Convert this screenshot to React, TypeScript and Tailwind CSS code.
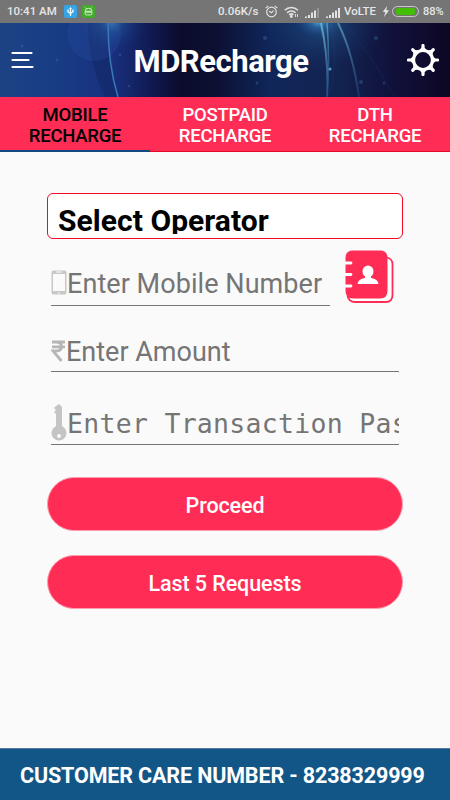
import React from 'react';

const tabs = [
  { top: 'MOBILE', active: true },
  { top: 'POSTPAID', active: false },
  { top: 'DTH', active: false },
];

function SignalIcon({ weak }: { weak?: boolean }) {
  return (
    <svg width="14" height="10" viewBox="0 0 14 10" fill="#e2e2e2">
      <path d="M0 10V8.5h2V10zM3 10V7h2v3zM6 10V4.5h2V10zM9 10V2.5h2V10z" />
      <path d="M12 10V0h2v10z" opacity={weak ? 0.3 : 1} />
    </svg>
  );
}

function StatusBar() {
  return (
    <div className="flex h-[23px] items-center bg-[#757575] pr-[6px] pl-[7px] text-[11.5px] font-medium text-[#e6e6e6]">
      <span className="w-[57px] pt-[1px] whitespace-nowrap">10:41 AM</span>
      <svg width="13" height="13" viewBox="0 0 13 13" fill="none">
        <rect width="13" height="13" rx="2" fill="#35a5e5" />
        <path d="M6.5 3v8M4 4.5v2.2L6.5 8.5L9 6.7V4.5" stroke="#fff" strokeWidth="1.3" />
        <path d="M5.2 4L6.5 2l1.3 2z" fill="#fff" />
      </svg>
      <svg className="ml-[5px]" width="13" height="13" viewBox="0 0 13 13" fill="none">
        <rect width="13" height="13" rx="2" fill="#43aa2d" />
        <path d="M3 6.3a3.5 3 0 0 1 7 0zM3 7.2h7v1.200a1.5 1.5 0 0 1-1.5 1.5h-4A1.5 1.5 0 0 1 3 8.400zM4.300 3.600L3.400 2.500M8.700 3.600l.9-1.100" stroke="#dff5d8" strokeWidth=".9" />
      </svg>
      <span className="ml-auto w-[43px] pt-[1px] whitespace-nowrap">0.06K/s</span>
      <svg className="ml-[4px]" width="13" height="13" viewBox="0 0 13 13" fill="none" stroke="#e2e2e2" strokeWidth="1.2">
        <circle cx="6.5" cy="7" r="4.8" />
        <path d="M4.2 6.2l2.3 1.5l2-2M.7 3.1L3.2 1M12.3 3.1L9.8 1" />
      </svg>
      <svg className="ml-[6px]" width="15" height="12" viewBox="0 0 15 12" fill="none" stroke="#e2e2e2" strokeWidth="1.5">
        <path d="M.7 4.3a9.5 9.5 0 0 1 13.3 0M3 6.7a6.2 6.2 0 0 1 8.6 0M5.2 8.9a3 3 0 0 1 4.2 0" />
        <circle cx="7.3" cy="10.5" r=".7" fill="#e2e2e2" />
        <path d="M11.5 8v3M13.5 8v3" strokeWidth=".9" />
      </svg>
      <div className="ml-[6px] flex w-[35px] justify-between pt-[2px]">
        <SignalIcon weak />
        <SignalIcon />
      </div>
      <span className="ml-[4px] w-[33px] pt-[1px] whitespace-nowrap">VoLTE</span>
      <svg className="ml-[5px]" width="8" height="11" viewBox="0 0 8 11" fill="#e2e2e2">
        <path d="M5.2 0L.8 5.8l2.5.5L2 11l5-6.5l-2.7-.5z" />
      </svg>
      <div className="ml-[2px] h-[11px] w-[27px] rounded-full border border-[#c9c9c9] p-[1px]">
        <div className="mx-[2px] h-full rounded-[2px] bg-[#43bd05]" />
      </div>
      <span className="ml-[4px] w-[21px] pt-[1px] text-[11px] whitespace-nowrap">88%</span>
    </div>
  );
}

function HeaderBackdrop() {
  return (
    <svg className="absolute inset-0" width="450" height="74" viewBox="0 0 450 74" fill="none">
      <defs>
        <linearGradient id="base" x1="0" x2="450" y1="0" y2="0" gradientUnits="userSpaceOnUse">
          <stop offset="0" stopColor="#1d4384" />
          <stop offset=".14" stopColor="#183b84" />
          <stop offset=".25" stopColor="#19307f" />
          <stop offset=".33" stopColor="#111b55" />
          <stop offset=".4" stopColor="#0b0c2c" />
          <stop offset=".48" stopColor="#0c1033" />
          <stop offset=".6" stopColor="#10265a" />
          <stop offset=".75" stopColor="#132350" />
          <stop offset=".88" stopColor="#101039" />
          <stop offset="1" stopColor="#0d0724" />
        </linearGradient>
        <radialGradient id="glow">
          <stop offset="0" stopColor="#4d9ed2" stopOpacity=".9" />
          <stop offset=".35" stopColor="#286fad" stopOpacity=".5" />
          <stop offset="1" stopColor="#19478b" stopOpacity="0" />
        </radialGradient>
        <linearGradient id="ray" x1="0" x2="0" y1="0" y2="74" gradientUnits="userSpaceOnUse">
          <stop stopColor="#74c0d8" />
          <stop offset="1" stopColor="#285c9c" stopOpacity=".6" />
        </linearGradient>
      </defs>
      <rect width="450" height="74" fill="url(#base)" />
      <path d="M88 0h20q0 40 10 74h-13Q88 40 88 0z" fill="#122866" opacity=".6" />
      <circle cx="94" cy="11" r="27" fill="#2c58ad" opacity=".22" />
      <ellipse cx="112" cy="0" rx="34" ry="28" fill="url(#glow)" opacity=".6" />
      <path d="M108 0q0 42 10 74" stroke="#3978b9" strokeWidth="1.5" />
      <ellipse cx="322" cy="0" rx="62" ry="48" fill="url(#glow)" opacity=".5" />
      <ellipse cx="318" cy="0" rx="23" ry="13" fill="url(#glow)" />
      <path d="M321 0q8 36 6 74" stroke="url(#ray)" strokeWidth="2" opacity=".8" />
      <path d="M327 0q3 38 0 74" stroke="url(#ray)" strokeWidth="1.5" opacity=".6" />
      <path d="M338 0q15 30 21 74" stroke="url(#ray)" strokeWidth="2" opacity=".6" />
      <path d="M331 0q8 42-2 74M345 0q28 35 50 74" stroke="#315f9b" opacity=".15" />
      <g fill="#4a87bd" opacity=".3">
        <circle cx="265" cy="15" r="2" />
        <circle cx="376" cy="15" r="2" />
        <circle cx="361" cy="59" r="2" />
        <circle cx="384" cy="60" r="1.5" />
        <circle cx="257" cy="60" r="1.5" />
        <circle cx="22" cy="23" r="1.5" />
        <circle cx="57" cy="37" r="1.3" />
        <circle cx="120" cy="32" r="1.3" />
        <circle cx="129" cy="63" r="1.3" />
      </g>
      <circle cx="330" cy="46" r="1.6" fill="#519bc8" />
    </svg>
  );
}

function GearIcon() {
  const angles = [0, 45, 90, 135, 180, 225, 270, 315];
  return (
    <svg width="32" height="32" viewBox="-16 -16 32 32" fill="#fff">
      <circle r="9.5" fill="none" stroke="#fff" strokeWidth="3.2" />
      {angles.map((angle) => (
        <path key={angle} transform={`rotate(${angle})`} d="M-3.8-9.5l2.2-3v-2a1.6 1.6 0 0 1 3.2 0v2l2.2 3z" />
      ))}
    </svg>
  );
}

function ContactsIcon() {
  return (
    <svg width="50" height="54" viewBox="0 0 50 54">
      <path d="M42 7.5Q47.5 9 47.5 14V45q0 7-7 7H10q-6 0-7.5-6" fill="#fff" stroke="#ff2d55" strokeWidth="1.8" />
      <path d="M8 .5h27q7.5 0 7.5 7.5v33q0 7.5-7.5 7.5H8Q.5 48.500.5 41V8Q.5.5 8 .5z" fill="#ff2d55" />
      <path d="M0 13h6M0 24.5h6M0 36h6" stroke="#fff" strokeWidth="2.8" strokeLinecap="round" />
      <ellipse cx="23" cy="21.5" rx="5.5" ry="6" fill="#fff" />
      <path d="M20 25h6v3q7 1.2 7.5 6H12.5q.5-4.8 7.5-6z" fill="#fff" />
    </svg>
  );
}

export default function App() {
  return (
    <div className="flex h-[800px] w-[450px] flex-col overflow-hidden bg-[#fafafa] font-['Roboto',sans-serif]">
      <StatusBar />

      {/* Header */}
      <header className="relative h-[74px] shrink-0">
        <HeaderBackdrop />
        <div className="relative flex h-full items-center justify-between px-[11px]">
          <svg width="23" height="18" viewBox="0 0 23 18" stroke="#fff" strokeWidth="2.2" strokeLinecap="round">
            <path d="M1.5 2h19M1.5 9h16M1.5 16h20" />
          </svg>
          <h1 className="pt-[3px] pl-[1px] text-[31px] leading-none font-bold tracking-[-0.45px] text-white">MDRecharge</h1>
          <GearIcon />
        </div>
      </header>

      {/* Tabs */}
      <nav className="grid h-[55px] shrink-0 grid-cols-3 bg-[#ff2d55]">
        {tabs.map((tab) => (
          <div
            key={tab.top}
            className={`pt-[8px] text-center text-[18.5px] leading-[21px] font-medium tracking-[-0.25px] ${
              tab.active ? 'border-b-2 border-[#12497f] text-black' : 'border-b border-[#e60a29] text-white'
            }`}
          >
            {tab.top}
            <br />
            RECHARGE
          </div>
        ))}
      </nav>

      {/* Recharge form */}
      <main className="flex flex-1 flex-col px-[47px] pt-[41px] text-[#757575]">
        <div className="h-[46px] rounded-[6px] border border-[#f30722] bg-white pt-[8px] pl-[10px]">
          <div className="h-[32px] overflow-hidden text-[30px] leading-[37px] font-bold tracking-[0.05px] text-black">
            Select Operator
          </div>
        </div>

        <div className="mt-[11px] flex h-[57px] items-start">
          <div className="ml-[4px] flex h-[56px] w-[279px] items-center border-b border-[#747474]">
            <svg className="mt-[10px] shrink-0" width="16" height="26" viewBox="0 0 16 26">
              <rect x=".5" y=".5" width="15" height="24" rx="2" fill="#c7c7c7" />
              <path d="M2 4h12v17H2z" fill="#fafafa" />
              <path d="M5 2h6M7 23h2" stroke="#fafafa" />
            </svg>
            <span className="pt-[13px] text-[27px] leading-none tracking-[0.06px] whitespace-nowrap">Enter Mobile Number</span>
          </div>
          <div className="ml-[15px]">
            <ContactsIcon />
          </div>
        </div>

        <div className="mx-[4px] flex h-[65px] items-center border-b border-[#747474] pt-[24px]">
          <svg className="mb-[2px] shrink-0" width="15" height="23" viewBox="0 0 15 23" fill="none" stroke="#b6b6b6" strokeWidth="2.8">
            <path d="M1 3h13M1 7.8h13M2 3h3q5.5 0 5.5 4.5T5 12H2l8.5 10" />
          </svg>
          <span className="pt-[2px] text-[27px] leading-none">Enter Amount</span>
        </div>

        <div className="mx-[4px] flex h-[73px] items-center overflow-hidden border-b border-[#747474] pt-[28px]">
          <svg className="shrink-0" width="16" height="38" viewBox="0 0 16 38" fill="#c4c4c4">
            <path d="M5 26V11L3 9l2-2-2-2 2-2 3-2 3 3v22z" />
            <path d="M8 22.5a7.5 7.5 0 1 0 0 15a7.5 7.5 0 0 0 0-15z" />
            <circle cx="8" cy="33" r="2" fill="#fafafa" />
          </svg>
          <span className="pt-[5px] font-['DejaVu_Sans_Mono',monospace] text-[26.5px] leading-none tracking-[0.28px] whitespace-nowrap">
            Enter Transaction Password
          </span>
        </div>

        <button className="mt-[32px] h-[54px] shrink-0 rounded-full border border-[#ff9cad] bg-[#ff2d55] pt-[5px] text-[21.5px] font-medium tracking-[-0.1px] text-white">
          Proceed
        </button>
        <button className="mt-[24px] h-[54px] shrink-0 rounded-full border border-[#ff9cad] bg-[#ff2d55] pt-[5px] text-[21.5px] font-medium tracking-[-0.1px] text-white">
          Last 5 Requests
        </button>
      </main>

      <footer className="flex h-[52px] shrink-0 items-center border-t border-[#54779b] bg-[#125688] pt-[4px] pl-[20px] text-[21.5px] font-bold tracking-[-0.14px] whitespace-nowrap text-white">
        CUSTOMER CARE NUMBER - 8238329999
      </footer>
    </div>
  );
}
